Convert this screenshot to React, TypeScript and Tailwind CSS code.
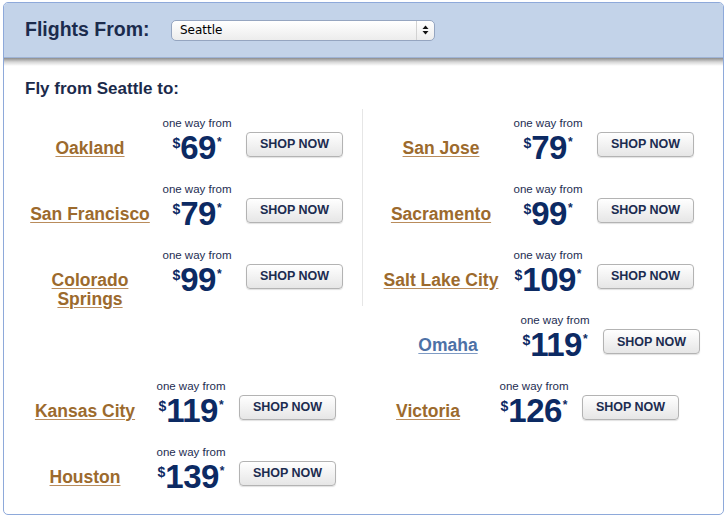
import React from "react";

type ItemProps = {
  city: React.ReactNode;
  price: string;
  link?: string;
  shift?: string;
  g1?: string;
  g2?: string;
};

function Item({
  city,
  price,
  link = "text-[#9c6a2d] decoration-[#b98c5c]",
  shift = "",
  g1 = "ml-[5px]",
  g2 = "ml-[12px]",
}: ItemProps) {
  return (
    <div className={`flex items-start h-[65.8px] ${shift}`}>
      <div className="w-[130px] mt-[22px] text-center leading-[18px]">
        <a
          className={`text-[17.5px] leading-[18px] font-bold underline underline-offset-[2px] cursor-pointer ${link}`}
        >
          {city}
        </a>
      </div>
      <div className={`w-[74px] flex flex-col items-center ${g1}`}>
        <div className="text-[11.5px] leading-[13px] text-[#1d2d52] whitespace-nowrap">one way from</div>
        <div className="flex items-start text-[#0c2a63] font-bold">
          <span className="text-[14px] leading-none mt-[6px]">$</span>
          <span className="text-[33px] leading-[36px] tracking-[-0.5px]">{price}</span>
          <span className="text-[12px] leading-none mt-[6px] ml-[1px]">*</span>
        </div>
      </div>
      <button
        className={`${g2} mt-[15px] w-[97px] h-[25px] rounded-[4px] border border-[#b3b3b3] bg-gradient-to-b from-white to-[#e6e6e6] shadow-[0_1px_1px_rgba(0,0,0,0.12)] text-[12.5px] font-bold text-[#1c2c50] leading-none`}
      >
        SHOP NOW
      </button>
    </div>
  );
}

export default function App() {
  return (
    <div className="w-[728px] h-[520px] bg-white pl-[3px] pt-[2px] font-['Liberation_Sans',Arial,sans-serif]">
      <div className="w-[721px] h-[513px] border border-[#8ea9da] rounded-[5px] overflow-hidden bg-white">
        {/* header */}
        <div className="h-[55px] bg-[#c3d3e9] border-b border-[#9fb4d6] flex items-center pl-[21px]">
          <div className="w-[146px] text-[19.5px] font-bold text-[#1b2b4d] leading-none">Flights From:</div>
          <div className="relative w-[264px] h-[21px] rounded-[5px] border border-[#95a5c0] bg-gradient-to-b from-white to-[#ececec] flex items-center">
            <span className="pl-[8px] text-[12px] text-black font-['DejaVu_Sans',sans-serif] leading-none">Seattle</span>
            <div className="absolute right-0 top-0 h-full w-[18px] border-l border-[#d2d2d2] flex items-center justify-center">
              <svg width="7" height="10" viewBox="0 0 7 10">
                <path d="M3.5 0.5 L6.5 4 L0.5 4 Z" fill="#111" />
                <path d="M0.5 6 L6.5 6 L3.5 9.5 Z" fill="#111" />
              </svg>
            </div>
          </div>
        </div>
        <div className="h-[8px] bg-gradient-to-b from-[#8d8d8d] via-[#d6d6d6] to-white" />

        {/* content */}
        <div className="pl-[21px]">
          <h2 className="mt-[13px] text-[17px] leading-[20px] font-bold text-[#1b2a4b]">Fly from Seattle to:</h2>

          <div className="mt-[10px] h-[197px] flex">
            <div className="w-[337px] pt-[8px]">
              <Item city="Oakland" price="69" />
              <Item city="San Francisco" price="79" />
              <Item
                city={
                  <>
                    Colorado
                    <br />
                    Springs
                  </>
                }
                price="99"
              />
            </div>
            <div className="border-l border-[#e6e6e6] pl-[13px] pt-[8px]">
              <Item city="San Jose" price="79" />
              <Item city="Sacramento" price="99" />
              <Item city="Salt Lake City" price="109" />
            </div>
          </div>

          <div className="mt-[8.4px]">
            <Item
              city="Omaha"
              price="119"
              shift="ml-[358px]"
              link="text-[#4d71a6] decoration-[#7f9bc4]"
              g2="ml-[11px]"
            />
            <div className="flex">
              <Item city="Kansas City" price="119" shift="ml-[-5px]" g1="ml-[4px]" g2="ml-[11px]" />
              <Item city="Victoria" price="126" shift="ml-[27px]" g1="ml-[4px]" g2="ml-[11px]" />
            </div>
            <Item city="Houston" price="139" shift="ml-[-5px]" g1="ml-[4px]" g2="ml-[11px]" />
          </div>
        </div>
      </div>
    </div>
  );
}
